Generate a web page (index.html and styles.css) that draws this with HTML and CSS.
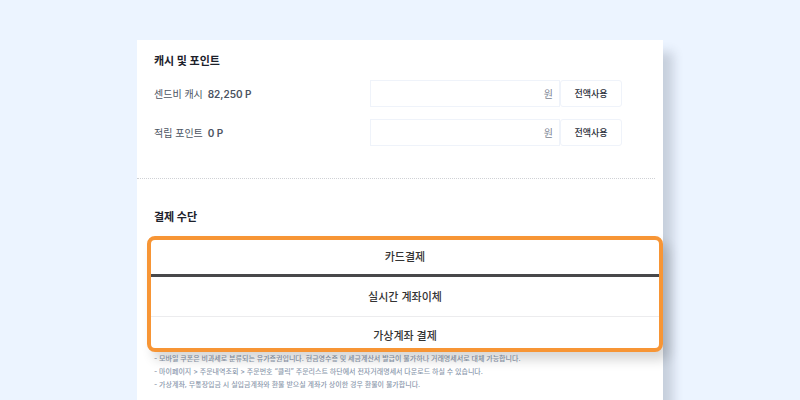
FILE: index.html
```html
<!DOCTYPE html>
<html lang="ko">
<head>
<meta charset="utf-8">
<title>결제</title>
<link rel="stylesheet" href="styles.css">
</head>
<body>
	<div class="pay-wrap">
		<section class="point-area">
			<h2 class="pay-title">캐시 및 포인트</h2>
			<div class="point-row">
				<label class="point-label" for="cash">센드비 캐시 <strong>82,250 P</strong></label>
				<div class="point-input">
					<input type="text" id="cash">
					<span>원</span>
				</div>
				<button type="button" class="all-btn">전액사용</button>
			</div>
			<div class="point-row">
				<label class="point-label" for="point">적립 포인트 <strong>0 P</strong></label>
				<div class="point-input">
					<input type="text" id="point">
					<span>원</span>
				</div>
				<button type="button" class="all-btn">전액사용</button>
			</div>
		</section>
		<section class="method-area">
			<h2 class="pay-title">결제 수단</h2>
			<div class="method-list">
				<button type="button" class="method-btn on">카드결제</button>
				<button type="button" class="method-btn">실시간 계좌이체</button>
				<button type="button" class="method-btn">가상계좌 결제</button>
			</div>
			<ul class="notice">
				<li>- 모바일 쿠폰은 비과세로 분류되는 유가증권입니다. 현금영수증 및 세금계산서 발급이 불가하나 거래명세서로 대체 가능합니다.</li>
				<li>- 마이페이지 &gt; 주문내역조회 &gt; 주문번호 “클릭” 주문리스트 하단에서 전자거래명세서 다운로드 하실 수 있습니다.</li>
				<li>- 가상계좌, 무통장입금 시 실입금계좌와 환불 받으실 계좌가 상이한 경우 환불이 불가합니다.</li>
			</ul>
		</section>
	</div>
</body>
</html>
```
FILE: styles.css
```css
*{
	box-sizing: border-box;
}
body{
	display: flex;
	flex-direction: column;
	min-height: 100vh;
	margin: 0;
	padding: 40px 137px 0;
	background: #ecf4ff;
	font-family: Inter, "Noto Sans CJK KR", sans-serif;
	color: #2b303b;
}
button,
input{
	font-family: inherit;
	color: inherit;
}
.pay-wrap{
	flex: 1;
	background: #fff;
	box-shadow: 10px 12px 10px rgba(50,60,80,0.2);
}
.point-area{
	margin-right: 8px;
	padding: 12px 33px 32px 17px;
	border-bottom: 1px dotted #cfd1d5;
}
.pay-title{
	margin: 0;
	font-size: 11px;
	line-height: 18px;
	font-weight: 700;
	color: #1c212b;
}
.point-row{
	display: flex;
	align-items: center;
	margin-top: 12px;
}
.point-row:first-of-type{
	margin-top: 10px;
}
.point-label{
	flex: 1;
	font-size: 10px;
	line-height: 16px;
	color: #4c5462;
}
.point-label strong{
	margin-left: 2px;
	font-weight: 600;
}
.point-input{
	display: flex;
	align-items: center;
	width: 190px;
	height: 27px;
	padding-right: 6px;
	border: 1px solid #eff3fa;
	font-size: 10px;
	color: #7c8593;
}
.point-input input{
	flex: 1;
	min-width: 0;
	height: 100%;
	padding: 0 6px;
	border: none;
	outline: none;
	background: none;
	font-size: 10px;
}
.all-btn{
	width: 62px;
	height: 27px;
	padding: 0;
	border: 1px solid #eff3fa;
	border-radius: 3px;
	background: #fff;
	font-size: 9px;
	font-weight: 500;
}
.method-area{
	padding-top: 29px;
}
.method-area .pay-title{
	padding-left: 17px;
}
.method-list{
	position: relative;
	margin: 10px 0 0 10px;
	border: 4px solid #f79535;
	border-radius: 8px;
	background: #fff;
	box-shadow: 6px 8px 12px rgba(0,0,0,0.16);
}
.method-btn{
	display: block;
	width: 100%;
	height: 40px;
	padding: 0;
	border: none;
	border-bottom: 1px solid #ececee;
	background: none;
	font-size: 11px;
	line-height: 16px;
	font-weight: 500;
	color: #333;
}
.method-btn.on{
	height: 37px;
	border-bottom: 3px solid #48484a;
}
.method-btn:last-child{
	height: 31px;
	padding-top: 7px;
	border-bottom: none;
}
.notice{
	margin: 0;
	padding: 0 17px;
	list-style: none;
	font-size: 7px;
	line-height: 13px;
	font-weight: 500;
	color: #8d9aae;
}
```
